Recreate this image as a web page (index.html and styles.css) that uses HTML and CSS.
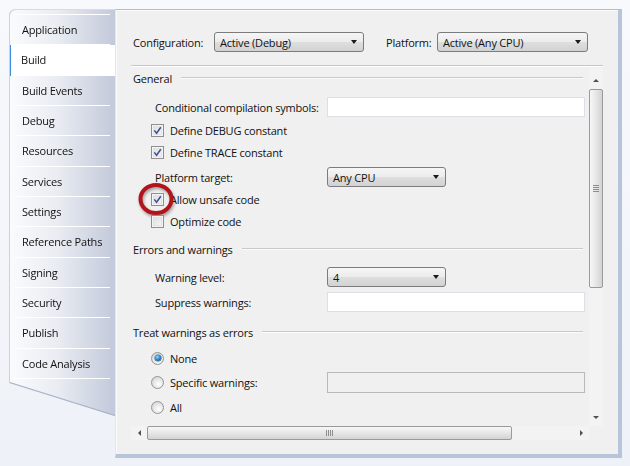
FILE: index.html
```html
<!DOCTYPE html>
<html>
<head>
<meta charset="utf-8">
<link rel="stylesheet" href="styles.css">
</head>
<body>
<div class="window">
  <div class="sidebar-wrap">
    <nav class="sidebar">
      <div class="tab">Application</div>
      <div class="tab selected">Build</div>
      <div class="tab">Build Events</div>
      <div class="tab">Debug</div>
      <div class="tab">Resources</div>
      <div class="tab">Services</div>
      <div class="tab">Settings</div>
      <div class="tab">Reference Paths</div>
      <div class="tab">Signing</div>
      <div class="tab">Security</div>
      <div class="tab">Publish</div>
      <div class="tab">Code Analysis</div>
    </nav>
  </div>
  <div class="panel">
    <div class="config-row">
      <span class="config-label">Configuration:</span>
      <div class="dropdown dd-config"><span>Active (Debug)</span><i class="dd-arrow"></i></div>
      <span class="platform-label">Platform:</span>
      <div class="dropdown dd-platform"><span>Active (Any CPU)</span><i class="dd-arrow"></i></div>
    </div>
    <div class="etched"></div>
    <div class="scroll">
      <div class="scroll-content">
        <div class="sect">General</div>
        <div class="field mt-9"><span class="field-label">Conditional compilation symbols:</span><div class="textbox"></div></div>
        <div class="check mt-2"><span class="cb"><svg class="tick" width="13" height="13" viewBox="0 0 13 13"><path d="M3.3 6.4 L5.6 9.3 L9.8 3.3" fill="none" stroke="#3e4f8d" stroke-width="1.5"/></svg></span><span>Define DEBUG constant</span></div>
        <div class="check"><span class="cb"><svg class="tick" width="13" height="13" viewBox="0 0 13 13"><path d="M3.3 6.4 L5.6 9.3 L9.8 3.3" fill="none" stroke="#3e4f8d" stroke-width="1.5"/></svg></span><span>Define TRACE constant</span></div>
        <div class="field mt-4"><span class="field-label">Platform target:</span><div class="dropdown dd-small"><span>Any CPU</span><i class="dd-arrow"></i></div></div>
        <div class="check mt-1"><span class="cb"><svg class="tick" width="13" height="13" viewBox="0 0 13 13"><path d="M3.3 6.4 L5.6 9.3 L9.8 3.3" fill="none" stroke="#3e4f8d" stroke-width="1.5"/></svg><svg class="highlight" width="40" height="36" viewBox="0 0 40 36"><ellipse cx="18" cy="17" rx="15.5" ry="14" fill="none" stroke="#b3141c" stroke-width="4"/></svg></span><span>Allow unsafe code</span></div>
        <div class="check"><span class="cb"></span><span>Optimize code</span></div>
        <div class="sect mt-7">Errors and warnings</div>
        <div class="field mt-8"><span class="field-label">Warning level:</span><div class="dropdown dd-small"><span>4</span><i class="dd-arrow"></i></div></div>
        <div class="field mt-5"><span class="field-label">Suppress warnings:</span><div class="textbox"></div></div>
        <div class="sect mt-10">Treat warnings as errors</div>
        <div class="check mt-5"><span class="radio on"></span><span>None</span></div>
        <div class="check mt-2"><span class="radio"></span><span class="radio-label">Specific warnings:</span><div class="textbox disabled"></div></div>
        <div class="check mt-3"><span class="radio"></span><span>All</span></div>
      </div>
      <div class="vscroll">
        <div class="arrow-box"><i class="tri-up"></i></div>
        <div class="vthumb"><i class="grip-h"></i></div>
        <div class="spacer"></div>
        <div class="arrow-box down"><i class="tri-down"></i></div>
      </div>
      <div class="hscroll">
        <div class="arrow-box-h"><i class="tri-left"></i></div>
        <div class="hthumb"><i class="grip-v"></i></div>
        <div class="spacer"></div>
        <div class="arrow-box-h"><i class="tri-right"></i></div>
      </div>
      <div class="corner"></div>
    </div>
  </div>
</div>
</body>
</html>
```
FILE: styles.css
```css
body {
  margin: 0;
  background: linear-gradient(#f7f9fc, #eef2f8);
  height: 466px;
  font-family: "Open Sans", "Noto Sans", sans-serif;
  font-size: 11px;
  letter-spacing: -0.2px;
  color: #111111;
}

.window {
  display: flex;
  align-items: flex-start;
  padding: 9px 0 0 10px;
}

/* ---------- sidebar ---------- */
.sidebar-wrap {
  margin-top: 1px;
  filter: drop-shadow(0 1px 0 #a6b1c5) drop-shadow(-1px 0 0 #ccd2de) drop-shadow(0 -1px 0 #d6dbe4);
}

.sidebar {
  width: 105px;
  height: 405px;
  box-sizing: border-box;
  padding-top: 4px;
  border-top-left-radius: 6px;
  background: linear-gradient(to right, #fafbfd 0%, #e9ecf2 45%, #c2c9da 100%);
  clip-path: polygon(0 0, 100% 0, 100% 405px, 0 372px);
}

.sidebar::before {
  content: "";
  display: block;
  height: 1px;
  margin: 0 5px 0 4px;
  background: #ffffff;
}

.tab {
  height: 30.33px;
  box-sizing: border-box;
  display: flex;
  align-items: center;
  padding: 0 0 1px 12px;
  background: linear-gradient(#ffffff, #ffffff) no-repeat left 4px bottom / calc(100% - 9px) 1px;
}

.tab.selected {
  background-color: #ffffff;
  border-left: 2px solid #3c8de6;
  padding-left: 10px;
  margin-left: -1px;
  margin-right: -1px;
  position: relative;
}

/* ---------- panel ---------- */
.panel {
  width: 507px;
  height: 449px;
  box-sizing: border-box;
  background: #f0f0f0;
  border-top: 1px solid #b3bccb;
  border-left: 1px solid #e2e6ee;
  border-right: 4px solid #b8c4d9;
  border-bottom: 4px solid #b8c4d9;
  box-shadow: inset 1px 1px 0 #fbfbfb;
  padding: 22px 15px 14px 15px;
  display: flex;
  flex-direction: column;
}

.config-row {
  display: flex;
  align-items: center;
  height: 20px;
  padding-left: 2px;
}

.config-label { width: 81px; }
.platform-label { width: 51px; margin-left: 22px; }

.dropdown {
  height: 20px;
  box-sizing: border-box;
  border: 1px solid #7c7c7c;
  border-radius: 3px;
  background: linear-gradient(#f6f6f6, #ececec 48%, #dedede 52%, #d2d2d2);
  display: flex;
  align-items: center;
  padding: 0 6px 0 5px;
}

.dd-config { width: 150px; }
.dd-platform { width: 151px; }
.dd-small { width: 119px; }

.dd-arrow {
  margin-left: auto;
  width: 0;
  height: 0;
  border-left: 3.5px solid transparent;
  border-right: 3.5px solid transparent;
  border-top: 4px solid #1a1a1a;
}

.etched {
  margin-top: 13px;
  border-top: 1px solid #c6c6c6;
  border-bottom: 1px solid #ffffff;
}

/* ---------- scroll area ---------- */
.scroll {
  margin-top: 1px;
  height: 372px;
  display: grid;
  grid-template-columns: 1fr 14px;
  grid-template-rows: 1fr 14px;
}

.scroll-content {
  overflow: hidden;
  display: flex;
  flex-direction: column;
}

.sect {
  display: flex;
  align-items: center;
  height: 20px;
  padding-left: 2px;
  flex-shrink: 0;
}

.sect::after {
  content: "";
  flex: 1;
  margin: 0 6px 0 9px;
  border-top: 1px solid #c9c9c9;
  border-bottom: 1px solid #fbfbfb;
}

.field {
  display: flex;
  align-items: center;
  height: 20px;
  padding-left: 24px;
  flex-shrink: 0;
}

.field-label { width: 172px; }

.textbox {
  width: 258px;
  height: 20px;
  box-sizing: border-box;
  background: #ffffff;
  border: 1px solid #dcdfe5;
}

.textbox.disabled {
  background: #f0f0f0;
  border-color: #b9b9b9;
  height: 21px;
}

.check {
  display: flex;
  align-items: center;
  height: 22px;
  padding-left: 20px;
  gap: 6px;
  flex-shrink: 0;
}

.radio-label { width: 151px; }

.cb {
  position: relative;
  width: 13px;
  height: 13px;
  box-sizing: border-box;
  border: 1px solid #8e8f8f;
  background: linear-gradient(135deg, #d9dadc, #f9f9f9);
  box-shadow: inset 0 0 0 1px #f4f4f4, inset 0 0 0 2px #e0e2e6;
}

.tick {
  display: block;
  margin: -1px 0 0 -1px;
}

.highlight {
  position: absolute;
  left: -14px;
  top: -12px;
  filter: drop-shadow(1px 2px 1.5px rgba(0, 0, 0, 0.35));
}

.radio {
  width: 13px;
  height: 13px;
  box-sizing: border-box;
  border-radius: 50%;
  border: 1px solid #949494;
  background: radial-gradient(circle at 60% 65%, #ffffff, #dcdcdc 70%, #cfcfcf);
  display: flex;
  align-items: center;
  justify-content: center;
}

.radio.on::after {
  content: "";
  width: 6px;
  height: 6px;
  border-radius: 50%;
  background: radial-gradient(circle at 40% 35%, #8fdcff, #1a78c2 55%, #0d3f7a);
  box-shadow: 0 0 0 0.5px #28507a;
}

.mt-1 { margin-top: 1px; }
.mt-2 { margin-top: 2px; }
.mt-3 { margin-top: 3px; }
.mt-4 { margin-top: 4px; }
.mt-5 { margin-top: 5px; }
.mt-7 { margin-top: 7px; }
.mt-8 { margin-top: 8px; }
.mt-9 { margin-top: 9px; }
.mt-10 { margin-top: 10px; }

/* ---------- scrollbars ---------- */
.vscroll {
  display: flex;
  flex-direction: column;
  align-items: center;
  padding-top: 4px;
  box-sizing: border-box;
  background: #f3f3f3;
}

.arrow-box {
  width: 14px;
  height: 16px;
  display: flex;
  align-items: center;
  justify-content: center;
  flex-shrink: 0;
}

.arrow-box.down { margin-bottom: 1px; }

.vthumb {
  width: 14px;
  height: 199px;
  margin-top: 1px;
  box-sizing: border-box;
  border: 1px solid #9a9a9a;
  border-radius: 2px;
  background: linear-gradient(to right, #f7f7f7, #e8e8e8 45%, #d3d3d3);
  display: flex;
  align-items: center;
  justify-content: center;
  flex-shrink: 0;
}

.spacer { flex: 1; }

.grip-h {
  width: 6px;
  height: 7px;
  background: repeating-linear-gradient(#8d8d8d 0 1px, transparent 1px 2px);
}

.hscroll {
  display: flex;
  align-items: center;
  background: #f3f3f3;
}

.arrow-box-h {
  width: 16px;
  height: 14px;
  display: flex;
  align-items: center;
  justify-content: center;
  flex-shrink: 0;
}

.hthumb {
  width: 365px;
  height: 14px;
  box-sizing: border-box;
  border: 1px solid #9a9a9a;
  border-radius: 2px;
  background: linear-gradient(#f7f7f7, #e8e8e8 45%, #d3d3d3);
  display: flex;
  align-items: center;
  justify-content: center;
  flex-shrink: 0;
}

.grip-v {
  width: 7px;
  height: 6px;
  background: repeating-linear-gradient(to right, #8d8d8d 0 1px, transparent 1px 2px);
}

.tri-up, .tri-down, .tri-left, .tri-right {
  width: 0;
  height: 0;
}

.tri-up {
  border-left: 3px solid transparent;
  border-right: 3px solid transparent;
  border-bottom: 3px solid #505050;
}

.tri-down {
  border-left: 3px solid transparent;
  border-right: 3px solid transparent;
  border-top: 3px solid #505050;
}

.tri-left {
  border-top: 3px solid transparent;
  border-bottom: 3px solid transparent;
  border-right: 3px solid #505050;
}

.tri-right {
  border-top: 3px solid transparent;
  border-bottom: 3px solid transparent;
  border-left: 3px solid #505050;
}

.corner { background: #f0f0f0; }
```
